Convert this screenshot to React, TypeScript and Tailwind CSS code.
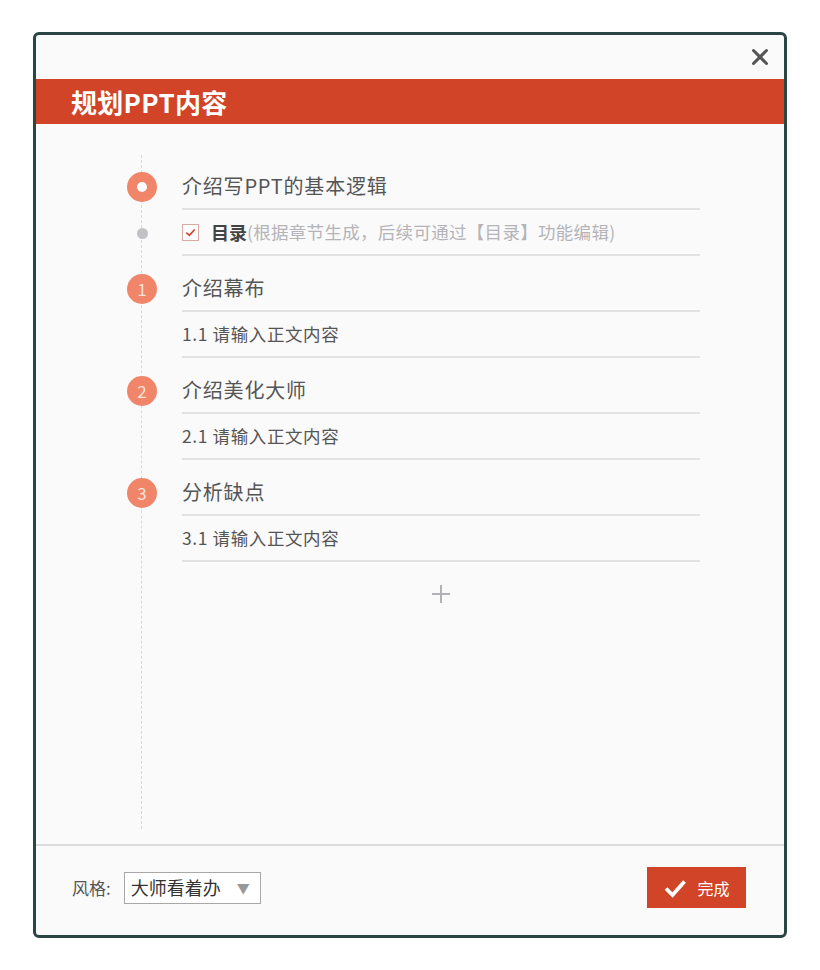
import { X } from "lucide-react";

const font = { fontFamily: '"Noto Sans CJK SC", "Noto Sans", sans-serif' };

const sections = [
  { num: "1", title: "介绍幕布", sub: "1.1 请输入正文内容" },
  { num: "2", title: "介绍美化大师", sub: "2.1 请输入正文内容" },
  { num: "3", title: "分析缺点", sub: "3.1 请输入正文内容" },
];

function Row({ marker, children }: { marker: React.ReactNode; children: React.ReactNode }) {
  return (
    <div className="flex h-[46px]">
      <div className="flex w-[40px] items-center justify-center">{marker}</div>
      <div className="ml-[20px] flex w-[518px] items-center border-b-2 border-[#e2e2e4]">{children}</div>
    </div>
  );
}

function NumberDot({ n }: { n: string }) {
  return (
    <span className="flex h-[30px] w-[30px] items-center justify-center rounded-full bg-[#f0856a] text-[17px] text-[#fde3d4]">
      {n}
    </span>
  );
}

export default function App() {
  return (
    <div className="min-h-screen bg-white pl-[33px] pt-[32px]" style={font}>
      <div className="flex h-[906px] w-[754px] flex-col rounded-[6px] border-[3px] border-[#2b4543] bg-[#fafafb]">
        <div className="flex h-[44px] items-center justify-end pr-[11px]">
          <X size={26} strokeWidth={2.8} className="text-[#555]" />
        </div>
        <div className="flex h-[45px] items-center bg-[#d14427] pl-[35px] text-[26px] font-bold tracking-[0.3px] text-white">
          规划PPT内容
        </div>

        <div className="relative flex-1 pt-[40px] pl-[86px]">
          <div className="absolute bottom-[15px] left-[105px] top-[31px] border-l border-dashed border-[#d8d8dc]" />

          <div className="relative">
            <Row marker={<span className="h-[30px] w-[30px] rounded-full border-[10px] border-[#f0856a] bg-white" />}>
              <span className="text-[20px] tracking-[0.8px] text-[#555]">介绍写PPT的基本逻辑</span>
            </Row>
            <Row marker={<span className="h-[11px] w-[11px] rounded-full bg-[#c2c2c6]" />}>
              <span className="flex h-[17px] w-[17px] items-center justify-center border border-[#dcaaa6] bg-white">
                <svg viewBox="0 0 16 16" className="h-[15px] w-[15px]">
                  <path d="M3.5 8.2 L6.8 11 L12.5 4.8" fill="none" stroke="#d14427" strokeWidth="1.8" />
                </svg>
              </span>
              <span className="ml-[12px] text-[18px] font-bold text-[#444]">目录</span>
              <span className="text-[17.5px] tracking-[0.3px] text-[#b4b4b8]">(根据章节生成，后续可通过【目录】功能编辑)</span>
            </Row>

            {sections.map((s) => (
              <div key={s.num} className="mt-[10px]">
                <Row marker={<NumberDot n={s.num} />}>
                  <span className="text-[20px] tracking-[0.8px] text-[#555]">{s.title}</span>
                </Row>
                <Row marker={null}>
                  <span className="text-[17.5px] tracking-[0.6px] text-[#555]">{s.sub}</span>
                </Row>
              </div>
            ))}

            <div className="ml-[60px] flex w-[518px] justify-center pt-[22px]">
              <svg viewBox="0 0 20 20" className="h-[20px] w-[20px]">
                <path d="M10 1 V19 M1 10 H19" stroke="#b2b2b6" strokeWidth="2" />
              </svg>
            </div>
          </div>
        </div>

        <div className="flex h-[91px] items-center justify-between border-t-2 border-[#dcdcde] pb-[6px] pl-[36px] pr-[38px]">
          <div className="flex items-center">
            <span className="text-[17px] text-[#555]">风格:</span>
            <div className="ml-[13px] flex h-[32px] w-[137px] items-center justify-between border border-[#a8a8a8] bg-white pl-[6px] pr-[10px]">
              <span className="text-[18px] text-[#333]">大师看着办</span>
              <span className="text-[13px] text-[#999]">▼</span>
            </div>
          </div>
          <button className="flex h-[41px] w-[99px] items-center justify-center gap-[10px] bg-[#d14427] text-[16px] text-white">
            <svg viewBox="0 0 24 24" className="h-[24px] w-[24px]">
              <path d="M3 12.5 L9.5 19 L21.5 5.5" fill="none" stroke="white" strokeWidth="3.8" />
            </svg>
            完成
          </button>
        </div>
      </div>
    </div>
  );
}
